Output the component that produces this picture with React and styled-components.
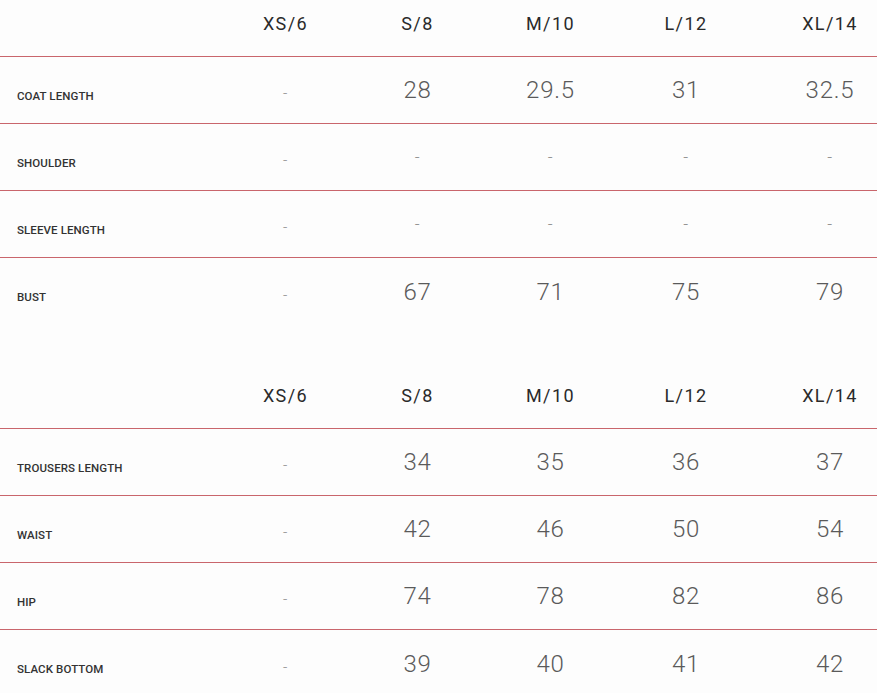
import React from 'react'
import styled, { createGlobalStyle } from 'styled-components'

const sizes = ['XS/6', 'S/8', 'M/10', 'L/12', 'XL/14']

const tops = [
    { label: 'COAT LENGTH', values: ['-', '28', '29.5', '31', '32.5'] },
    { label: 'SHOULDER', values: ['-', '-', '-', '-', '-'] },
    { label: 'SLEEVE LENGTH', values: ['-', '-', '-', '-', '-'] },
    { label: 'BUST', values: ['-', '67', '71', '75', '79'] },
]

const bottoms = [
    { label: 'TROUSERS LENGTH', values: ['-', '34', '35', '36', '37'] },
    { label: 'WAIST', values: ['-', '42', '46', '50', '54'] },
    { label: 'HIP', values: ['-', '74', '78', '82', '86'] },
    { label: 'SLACK BOTTOM', values: ['-', '39', '40', '41', '42'] },
]

export default function App() {
    return (
        <>
            <GlobalStyle />
            <Page>
                <SizeTable rows={tops} />
                <SizeTable rows={bottoms} />
            </Page>
        </>
    )
}

function SizeTable({ rows }) {
    return (
        <Table>
            <HeadRow>
                <span />
                {sizes.map((s) => (
                    <HeadCell key={s}>{s}</HeadCell>
                ))}
            </HeadRow>
            {rows.map((row) => (
                <Row key={row.label}>
                    <Label>{row.label}</Label>
                    {row.values.map((v, i) => (
                        <Value key={i} $dash={v === '-'} $first={i === 0}>
                            {v}
                        </Value>
                    ))}
                </Row>
            ))}
        </Table>
    )
}

const GlobalStyle = createGlobalStyle`
    html, body {
        margin: 0;
        padding: 0;
        background: #fdfdfd;
    }
    body {
        font-family: Roboto, "Liberation Sans", sans-serif;
        overflow: hidden;
    }
`

const Page = styled.div`
    width: 877px;
    height: 693px;
    overflow: hidden;
    display: flex;
    flex-direction: column;
    gap: 47px;
    background: #fdfdfd;
`

const Table = styled.div`
    display: flex;
    flex-direction: column;
`

const grid = `
    display: grid;
    grid-template-columns: 220px 131px 133px 133px 138px 1fr;
    > :last-child {
        padding-left: 28px;
    }
`

const HeadRow = styled.div`
    ${grid}
    height: 57px;
    align-items: center;
    padding-bottom: 10px;
    box-sizing: border-box;
    border-bottom: 1px solid #c9666c;
`

const HeadCell = styled.div`
    text-align: center;
    font-size: 18px;
    font-weight: 400;
    letter-spacing: 1.4px;
    color: #2a2a2a;
`

const Row = styled.div`
    ${grid}
    height: 67px;
    box-sizing: border-box;
    align-items: center;
    border-bottom: 1px solid #c9666c;
    &:last-child {
        border-bottom: none;
    }
`

const Label = styled.div`
    padding-left: 17px;
    padding-top: 11px;
    font-size: 11.5px;
    font-weight: 500;
    color: #333;
    letter-spacing: 0.1px;
`

const Value = styled.div`
    text-align: center;
    font-weight: 300;
    font-size: ${(p) => (p.$dash ? (p.$first ? '15px' : '17px') : '24px')};
    padding-top: ${(p) => (p.$dash && p.$first ? '6px' : '0')};
    color: ${(p) => (p.$dash ? '#8a8a8a' : '#5a5a5a')};
    letter-spacing: 0.8px;
`
